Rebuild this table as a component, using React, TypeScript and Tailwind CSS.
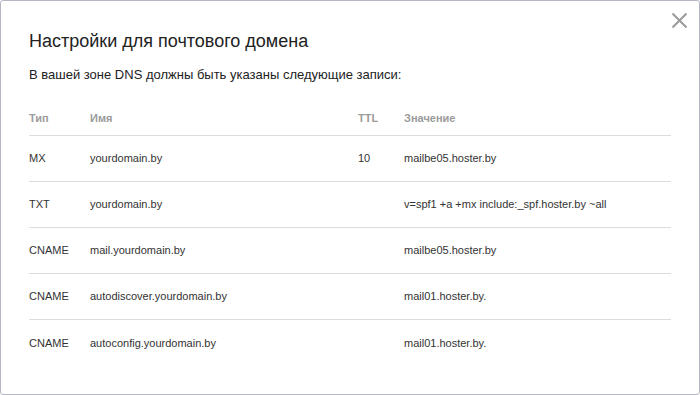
import React from 'react';

type Rec = { type: string; name: string; ttl: string; value: string };

const records: Rec[] = [
  { type: 'MX', name: 'yourdomain.by', ttl: '10', value: 'mailbe05.hoster.by' },
  { type: 'TXT', name: 'yourdomain.by', ttl: '', value: 'v=spf1 +a +mx include:_spf.hoster.by ~all' },
  { type: 'CNAME', name: 'mail.yourdomain.by', ttl: '', value: 'mailbe05.hoster.by' },
  { type: 'CNAME', name: 'autodiscover.yourdomain.by', ttl: '', value: 'mail01.hoster.by.' },
  { type: 'CNAME', name: 'autoconfig.yourdomain.by', ttl: '', value: 'mail01.hoster.by.' },
];

export default function App() {
  return (
    <div className="w-[700px] h-[395px] bg-white" style={{ fontFamily: '"Liberation Sans", Arial, sans-serif' }}>
      <div className="relative w-full h-full border border-[#b6b6c4] rounded-[3px] px-[28px] pt-[29px]">
        <button className="absolute right-[11px] top-[11px] w-[17px] h-[17px] text-[#9a9a9a]">
          <svg viewBox="0 0 17 17" width="17" height="17" fill="none" stroke="currentColor" strokeWidth="2">
            <path d="M1.5 1.5 L15.5 15.5 M15.5 1.5 L1.5 15.5" />
          </svg>
        </button>

        <h1 className="text-[18px] leading-[22px] text-[#222]">Настройки для почтового домена</h1>
        <p className="mt-[15px] text-[13px] leading-[16px] text-[#222]">
          В вашей зоне DNS должны быть указаны следующие записи:
        </p>

        <div className="mt-[28px] flex pb-[10px] border-b border-[#dcdcdc] text-[11px] leading-[14px] font-bold text-[#9b9b9b]">
          <div className="w-[61px]">Тип</div>
          <div className="w-[268px]">Имя</div>
          <div className="w-[46px]">TTL</div>
          <div>Значение</div>
        </div>

        {records.map((r, i) => (
          <div key={i}
            className={`flex items-center h-[46px] text-[11px] text-[#333] ${i < records.length - 1 ? 'border-b border-[#dcdcdc]' : ''}`}>
            <div className="w-[61px]">{r.type}</div>
            <div className="w-[268px]">{r.name}</div>
            <div className="w-[46px]">{r.ttl}</div>
            <div>{r.value}</div>
          </div>
        ))}
      </div>
    </div>
  );
}
